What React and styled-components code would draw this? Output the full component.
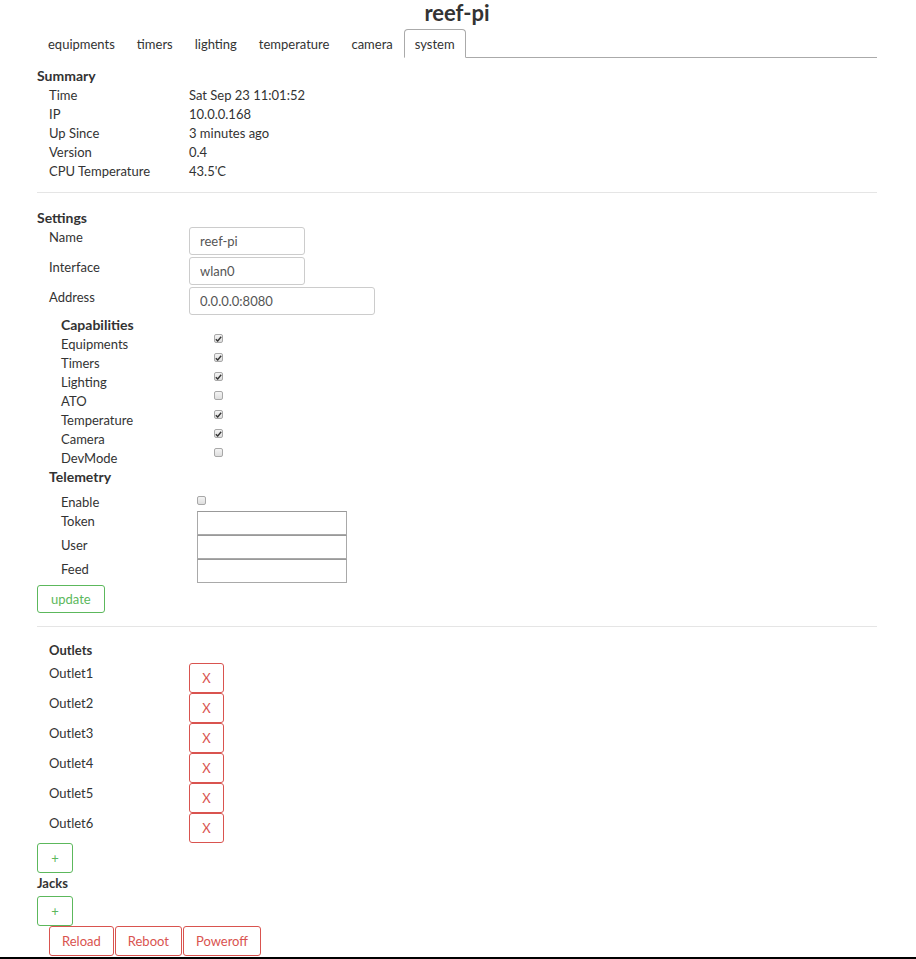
import React from "react";
import styled, { createGlobalStyle } from "styled-components";

const GlobalStyle = createGlobalStyle`
    body {
        margin: 0;
        background: #fff;
        color: #333;
        font-family: "Segoe UI", Lato, "Liberation Sans", sans-serif;
        font-size: 13px;
    }
`;

const Page = styled.div`
    width: 840px;
    margin-left: 37px;
    display: flex;
    flex-direction: column;
`;

const Title = styled.h1`
    margin: 0;
    text-align: center;
    font-size: 22px;
    font-weight: 700;
    line-height: 26px;
    color: #333;
`;

const TabBar = styled.ul`
    list-style: none;
    margin: 3px 0 0;
    padding: 0;
    display: flex;
    height: 28px;
    border-bottom: 1px solid #aaa;
`;

const Tab = styled.li`
    padding: 1px 10px 0;
    line-height: 27px;
    margin-bottom: -1px;
    color: #333;
    border: 1px solid ${p => (p.$active ? "#aaa" : "transparent")};
    border-bottom-color: ${p => (p.$active ? "#fff" : "transparent")};
    border-radius: 4px 4px 0 0;
    background: #fff;
`;

const Heading = styled.div`
    font-weight: 700;
    font-size: ${p => p.$size || 14}px;
    line-height: 19px;
    margin-top: ${p => p.$top || 0}px;
    margin-bottom: ${p => p.$bottom || 0}px;
    padding-left: ${p => p.$indent || 0}px;
    color: #333;
`;

const InfoGrid = styled.div`
    display: grid;
    grid-template-columns: 140px 1fr;
    padding-left: 12px;
    margin-top: 1px;
    line-height: 19px;
`;

const Divider = styled.hr`
    border: 0;
    border-top: 1px solid #e5e5e5;
    margin: ${p => p.$top}px 0 ${p => p.$bottom}px;
    width: 100%;
`;

const Fields = styled.div`
    display: flex;
    flex-direction: column;
    gap: 2px;
    padding-left: 12px;
`;

const FieldRow = styled.div`
    display: grid;
    grid-template-columns: 140px auto;
    align-items: start;
    line-height: 19px;

    & > span {
        padding-top: 1px;
    }
`;

const TextInput = styled.input`
    box-sizing: border-box;
    width: ${p => p.$width}px;
    height: 28px;
    padding: 0 10px;
    border: 1px solid #ccc;
    border-radius: 3px;
    font: inherit;
    font-size: 13px;
    color: #555;
`;

const CheckList = styled.div`
    padding-left: ${p => p.$indent}px;
    margin-top: ${p => p.$top || 0}px;
    display: flex;
    flex-direction: column;
`;

const CheckRow = styled.div`
    display: grid;
    grid-template-columns: ${p => p.$col}px auto;
    line-height: 19px;
    height: ${p => p.$height || 19}px;

    & > span:first-child {
        padding-top: 1px;
    }
`;

const Box = styled.span`
    box-sizing: border-box;
    display: inline-flex;
    align-items: center;
    justify-content: center;
    width: 9px;
    height: 9px;
    margin-top: ${p => p.$top}px;
    border: 1px solid #a8a8a8;
    border-radius: 2px;
    background: linear-gradient(#f4f4f4, #dedede);
`;

const Telemetry = styled.div`
    padding-left: 12px;
    display: flex;
    flex-direction: column;
`;

const PlainInput = styled.input`
    box-sizing: border-box;
    width: 150px;
    height: 24px;
    border: 1px solid #a9a9a9;
    border-top-color: #999;
    padding: 0 4px;
    font: inherit;
`;

const Button = styled.button`
    box-sizing: border-box;
    height: ${p => p.$height || 28}px;
    width: ${p => (p.$width ? p.$width + "px" : "auto")};
    padding: 0 ${p => p.$pad ?? 12}px;
    background: #fff;
    border: 1px solid ${p => (p.$danger ? "#d9534f" : "#5cb85c")};
    color: ${p => (p.$danger ? "#d9534f" : "#5cb85c")};
    border-radius: 3px;
    font: inherit;
    font-size: 13px;
`;

const OutletRow = styled.div`
    display: grid;
    grid-template-columns: 140px auto;
    align-items: start;
    line-height: 19px;
    padding-left: 12px;
    height: 30px;

    & > span {
        padding-top: 1px;
    }
`;

const ButtonRow = styled.div`
    display: flex;
    gap: 1px;
    padding-left: ${p => p.$indent || 0}px;
    margin-top: ${p => p.$top || 0}px;
`;

const BottomEdge = styled.div`
    height: 3px;
    margin-top: 1px;
    background: #000;
`;

const Check = ({ on, top }) => (
    <Box $top={top}>
        {on && (
            <svg width="7" height="6" viewBox="0 0 7 6">
                <path d="M0.8 3.2 L2.7 5 L6.2 0.8" fill="none" stroke="#333" strokeWidth="1.4" />
            </svg>
        )}
    </Box>
);

const summary = [
    ["Time", "Sat Sep 23 11:01:52"],
    ["IP", "10.0.0.168"],
    ["Up Since", "3 minutes ago"],
    ["Version", "0.4"],
    ["CPU Temperature", "43.5'C"],
];

const capabilities = [
    ["Equipments", true],
    ["Timers", true],
    ["Lighting", true],
    ["ATO", false],
    ["Temperature", true],
    ["Camera", true],
    ["DevMode", false],
];

const tabs = ["equipments", "timers", "lighting", "temperature", "camera", "system"];
const outlets = ["Outlet1", "Outlet2", "Outlet3", "Outlet4", "Outlet5", "Outlet6"];

const App = () => {
    return (
        <>
            <GlobalStyle />
            <Page>
                <Title>reef-pi</Title>
                <TabBar>
                    {tabs.map(t => (
                        <Tab key={t} $active={t === "system"}>{t}</Tab>
                    ))}
                </TabBar>

                <Heading $top={8}>Summary</Heading>
                <InfoGrid>
                    {summary.map(([k, v]) => (
                        <React.Fragment key={k}>
                            <span>{k}</span>
                            <span>{v}</span>
                        </React.Fragment>
                    ))}
                </InfoGrid>

                <Divider $top={11} $bottom={15} />

                <Heading>Settings</Heading>
                <Fields>
                    <FieldRow>
                        <span>Name</span>
                        <TextInput $width={116} defaultValue="reef-pi" />
                    </FieldRow>
                    <FieldRow>
                        <span>Interface</span>
                        <TextInput $width={116} defaultValue="wlan0" />
                    </FieldRow>
                    <FieldRow>
                        <span>Address</span>
                        <TextInput $width={186} defaultValue="0.0.0.0:8080" />
                    </FieldRow>
                </Fields>

                <CheckList $indent={24}>
                    <Heading>Capabilities</Heading>
                    {capabilities.map(([name, on]) => (
                        <CheckRow key={name} $col={153}>
                            <span>{name}</span>
                            <Check on={on} top={0} />
                        </CheckRow>
                    ))}
                </CheckList>

                <Telemetry>
                    <Heading>Telemetry</Heading>
                    <CheckList $indent={12} $top={6}>
                        <CheckRow $col={136}>
                            <span>Enable</span>
                            <Check top={4} />
                        </CheckRow>
                        {["Token", "User", "Feed"].map(f => (
                            <CheckRow key={f} $col={136} $height={24}>
                                <span>{f}</span>
                                <PlainInput />
                            </CheckRow>
                        ))}
                    </CheckList>
                </Telemetry>

                <ButtonRow $top={2}>
                    <Button $pad={13}>update</Button>
                </ButtonRow>

                <Divider $top={13} $bottom={14} />

                <Heading $indent={12} $size={13} $bottom={3}>Outlets</Heading>
                {outlets.map(o => (
                    <OutletRow key={o}>
                        <span>{o}</span>
                        <Button $danger $width={35} $height={30} $pad={0}>X</Button>
                    </OutletRow>
                ))}
                <ButtonRow>
                    <Button $width={36} $height={30} $pad={0}>+</Button>
                </ButtonRow>
                <Heading $size={13} $top={1}>Jacks</Heading>
                <ButtonRow $top={3}>
                    <Button $width={36} $height={30} $pad={0}>+</Button>
                </ButtonRow>
                <ButtonRow $indent={12}>
                    <Button $danger $height={30}>Reload</Button>
                    <Button $danger $height={30}>Reboot</Button>
                    <Button $danger $height={30}>Poweroff</Button>
                </ButtonRow>
            </Page>
            <BottomEdge />
        </>
    );
};

export default App;
